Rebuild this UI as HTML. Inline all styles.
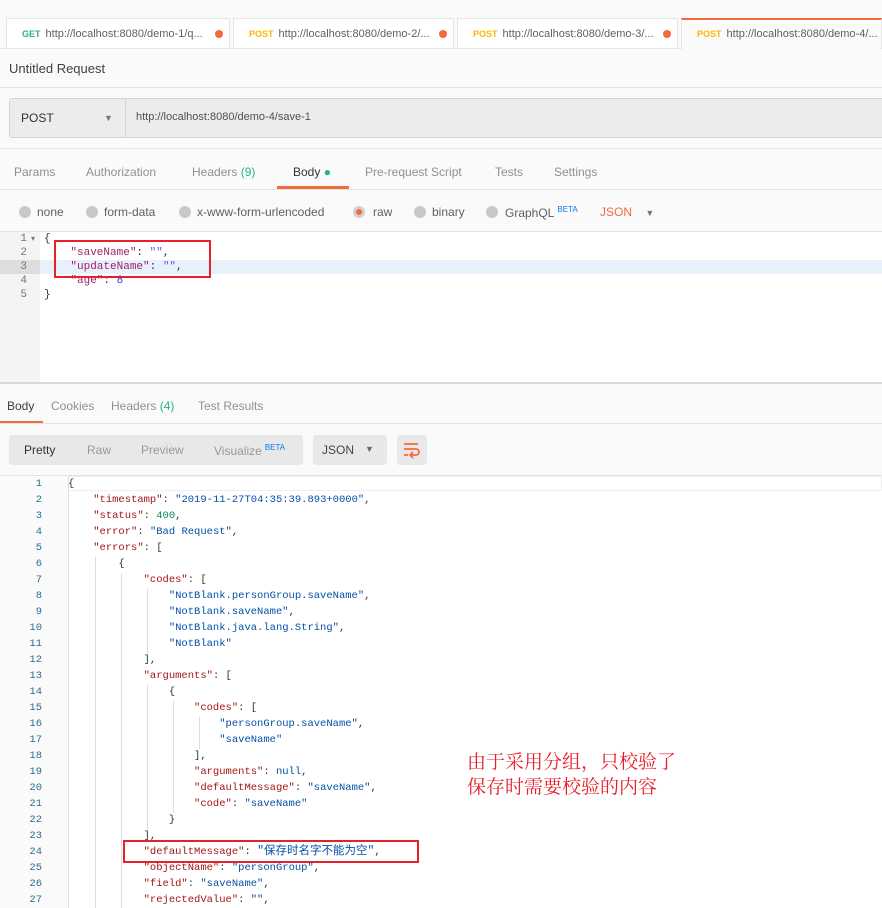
<!DOCTYPE html>
<html><head><meta charset="utf-8"><style>
*{margin:0;padding:0;box-sizing:border-box}
body{width:882px;height:908px;overflow:hidden;background:#fafafa;font-family:"Liberation Sans",sans-serif;position:relative;color:#505050}
.a{position:absolute;white-space:nowrap}
.tab{position:absolute;top:18px;height:31px;background:#fff;border:1px solid #e6e6e6;border-bottom:none;font-size:11px;line-height:30px;padding-left:15px;color:#606060;white-space:nowrap;overflow:hidden}
.tab b{font-size:9px;margin-right:5px}
.dot{position:absolute;right:6px;top:11px;width:8px;height:8px;border-radius:50%;background:#f26b3a}
.hl{position:absolute;left:0;width:882px;height:1px;background:#e2e2e2}
.t{position:absolute;font-size:12px;color:#909090;top:165px;white-space:nowrap}
.r{position:absolute;top:206px;width:12px;height:12px;border-radius:50%;background:#c8c8c8}
.rl{position:absolute;top:205px;font-size:12px;color:#606060;white-space:nowrap}
.mono{font-family:"Liberation Mono",monospace}
.ed{position:absolute;font-size:11px;line-height:14px;white-space:pre}
.k{color:#a0226e}.s{color:#5c5ce0}.n{color:#3a3ad0}
.code{position:absolute;left:0;top:476px;font-size:10.5px;line-height:16px}
.ln{position:absolute;width:42px;text-align:right;color:#2a6e8e}
.cl{position:absolute;color:#333}
.K{color:#a31515}.S{color:#0451a5}.N{color:#098658}
.g{position:absolute;width:1px;background:#ddd}
</style></head><body>
<div class="tab" style="left:6px;width:224px"><b style="color:#26b47f">GET</b>http://localhost:8080/demo-1/q...<span class="dot"></span></div>
<div class="tab" style="left:233px;width:221px"><b style="color:#ffb400">POST</b>http://localhost:8080/demo-2/...<span class="dot"></span></div>
<div class="tab" style="left:457px;width:221px"><b style="color:#ffb400">POST</b>http://localhost:8080/demo-3/...<span class="dot"></span></div>
<div class="tab" style="left:681px;width:201px;background:#fafafa;border-top:2px solid #f26b3a;line-height:28px"><b style="color:#ffb400">POST</b>http://localhost:8080/demo-4/...</div>
<div class="hl" style="top:48px;width:681px;background:#e6e6e6"></div>
<div class="a" style="left:9px;top:61px;font-size:13px;color:#404040">Untitled Request</div>
<div class="hl" style="top:87px"></div>
<div class="a" style="left:9px;top:98px;width:880px;height:40px;background:#ececec;border:1px solid #d4d4d4;border-radius:3px"></div>
<div class="a" style="left:125px;top:99px;width:1px;height:38px;background:#d4d4d4"></div>
<div class="a" style="left:21px;top:111px;font-size:12px;color:#333">POST</div>
<div class="a" style="left:104px;top:113px;font-size:9px;color:#777">▼</div>
<div class="a" style="left:136px;top:111px;font-size:11px;color:#505050">http://localhost:8080/demo-4/save-1</div>
<div class="hl" style="top:148px"></div>
<div class="t" style="left:14px">Params</div>
<div class="t" style="left:86px">Authorization</div>
<div class="t" style="left:192px">Headers <span style="color:#26b47f">(9)</span></div>
<div class="t" style="left:293px;color:#333">Body <span style="color:#26b47f">●</span></div>
<div class="t" style="left:365px">Pre-request Script</div>
<div class="t" style="left:495px">Tests</div>
<div class="t" style="left:554px">Settings</div>
<div class="a" style="left:277px;top:186px;width:72px;height:3px;background:#f26b3a"></div>
<div class="hl" style="top:189px"></div>
<div class="r" style="left:19px"></div><div class="rl" style="left:37px">none</div>
<div class="r" style="left:86px"></div><div class="rl" style="left:104px">form-data</div>
<div class="r" style="left:179px"></div><div class="rl" style="left:197px">x-www-form-urlencoded</div>
<div class="r" style="left:353px;background:#f26b3a;border:3px solid #d0d0d0"></div><div class="rl" style="left:373px">raw</div>
<div class="r" style="left:414px"></div><div class="rl" style="left:432px">binary</div>
<div class="r" style="left:486px"></div><div class="rl" style="left:505px">GraphQL<sup style="color:#097bed;font-size:8px;margin-left:3px">BETA</sup></div>
<div class="rl" style="left:600px;color:#f26b3a">JSON <span style="color:#777;font-size:9px;margin-left:10px">▼</span></div>
<div class="hl" style="top:231px"></div>
<div class="a" style="left:0;top:232px;width:40px;height:150px;background:#f4f4f4"></div>
<div class="a" style="left:40px;top:232px;width:842px;height:150px;background:#fff"></div>
<div class="a" style="left:0;top:260px;width:40px;height:14px;background:#ddd"></div>
<div class="a" style="left:40px;top:260px;width:842px;height:14px;background:#e8f0fb"></div>
<div class="ed mono" style="left:0;top:232px;width:27px;text-align:right;color:#777">1
2
3
4
5</div>
<div class="a mono" style="left:31px;top:234px;font-size:8px;color:#777">▾</div>
<div class="ed mono" style="left:44px;top:232px;color:#333">{
    <span class="k">"saveName"</span>: <span class="s">""</span>,
    <span class="k">"updateName"</span>: <span class="s">""</span>,
    <span class="k">"age"</span>: <span class="n">8</span>
}</div>
<div class="a" style="left:54px;top:240px;width:157px;height:38px;border:2px solid #e8202a"></div>
<div class="a" style="left:0;top:382px;width:882px;height:2px;background:#d8d8d8"></div>
<div class="a" style="left:7px;top:399px;font-size:12px;color:#404040">Body</div>
<div class="a" style="left:51px;top:399px;font-size:12px;color:#909090">Cookies</div>
<div class="a" style="left:111px;top:399px;font-size:12px;color:#909090">Headers <span style="color:#26b47f">(4)</span></div>
<div class="a" style="left:198px;top:399px;font-size:12px;color:#909090">Test Results</div>
<div class="a" style="left:0;top:421px;width:43px;height:2px;background:#f26b3a"></div>
<div class="hl" style="top:423px"></div>
<div class="a" style="left:9px;top:435px;width:294px;height:30px;background:#e8e8e8;border-radius:3px"></div>
<div class="a" style="left:24px;top:443px;font-size:12px;color:#333">Pretty</div>
<div class="a" style="left:87px;top:443px;font-size:12px;color:#999">Raw</div>
<div class="a" style="left:141px;top:443px;font-size:12px;color:#999">Preview</div>
<div class="a" style="left:214px;top:443px;font-size:12px;color:#999">Visualize<sup style="color:#097bed;font-size:8px;margin-left:3px">BETA</sup></div>
<div class="a" style="left:313px;top:435px;width:74px;height:30px;background:#e8e8e8;border-radius:3px"></div>
<div class="a" style="left:322px;top:443px;font-size:12px;color:#444">JSON</div>
<div class="a" style="left:365px;top:444px;font-size:9px;color:#666">▼</div>
<div class="a" style="left:397px;top:435px;width:30px;height:30px;background:#e8e8e8;border-radius:3px"></div>
<svg class="a" style="left:402px;top:441px" width="20" height="18" viewBox="0 0 20 18"><path d="M2 3h14M2 8h12a3 3 0 0 1 0 6H9M11 11l-3 3 3 3M2 14h4" stroke="#f26b3a" stroke-width="1.7" fill="none"/></svg>
<div class="hl" style="top:475px"></div>
<div class="a" style="left:0;top:476px;width:68px;height:432px;background:#fafafa"></div>
<div class="a" style="left:68px;top:476px;width:814px;height:432px;background:#fff;border-left:1px solid #ddd"></div>
<div class="a" style="left:68px;top:476px;width:814px;height:15px;border:1px solid #eee;border-left:1px solid #ddd"></div>
<div class="g" style="left:95px;top:557px;height:351px"></div>
<div class="g" style="left:121px;top:573px;height:335px"></div>
<div class="g" style="left:147px;top:589px;height:64px"></div>
<div class="g" style="left:147px;top:685px;height:144px"></div>
<div class="g" style="left:173px;top:701px;height:112px"></div>
<div class="g" style="left:199px;top:717px;height:32px"></div>
<div class="code mono" style="width:882px">
<div class="ln" style="top:0">1<br>2<br>3<br>4<br>5<br>6<br>7<br>8<br>9<br>10<br>11<br>12<br>13<br>14<br>15<br>16<br>17<br>18<br>19<br>20<br>21<br>22<br>23<br>24<br>25<br>26<br>27</div>
<div class="cl" style="left:68px;top:0;white-space:pre">{
    <span class="K">"timestamp"</span>: <span class="S">"2019-11-27T04:35:39.893+0000"</span>,
    <span class="K">"status"</span>: <span class="N">400</span>,
    <span class="K">"error"</span>: <span class="S">"Bad Request"</span>,
    <span class="K">"errors"</span>: [
        {
            <span class="K">"codes"</span>: [
                <span class="S">"NotBlank.personGroup.saveName"</span>,
                <span class="S">"NotBlank.saveName"</span>,
                <span class="S">"NotBlank.java.lang.String"</span>,
                <span class="S">"NotBlank"</span>
            ],
            <span class="K">"arguments"</span>: [
                {
                    <span class="K">"codes"</span>: [
                        <span class="S">"personGroup.saveName"</span>,
                        <span class="S">"saveName"</span>
                    ],
                    <span class="K">"arguments"</span>: <span class="S">null</span>,
                    <span class="K">"defaultMessage"</span>: <span class="S">"saveName"</span>,
                    <span class="K">"code"</span>: <span class="S">"saveName"</span>
                }
            ],
            <span class="K">"defaultMessage"</span>: <span class="S" style="font-family:'Liberation Mono','Noto Sans CJK SC',monospace;font-size:11.5px">"保存时名字不能为空"</span>,
            <span class="K">"objectName"</span>: <span class="S">"personGroup"</span>,
            <span class="K">"field"</span>: <span class="S">"saveName"</span>,
            <span class="K">"rejectedValue"</span>: <span class="S">""</span>,</div>
</div>
<div class="a" style="left:123px;top:840px;width:296px;height:23px;border:2px solid #e8202a"></div>
<div class="a" style="left:467px;top:748px;font-size:19px;line-height:25px;color:#e8202a;font-family:'Noto Serif CJK SC',serif">由于采用分组，只校验了<br>保存时需要校验的内容</div>
</body></html>
